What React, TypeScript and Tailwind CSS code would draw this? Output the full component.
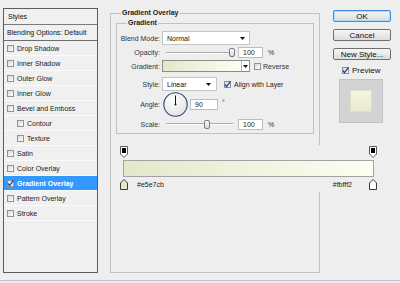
import React from "react";

type StyleRow = { label: string; indent?: boolean; active?: boolean };

const styleRows: StyleRow[] = [
  { label: "Drop Shadow" },
  { label: "Inner Shadow" },
  { label: "Outer Glow" },
  { label: "Inner Glow" },
  { label: "Bevel and Emboss" },
  { label: "Contour", indent: true },
  { label: "Texture", indent: true },
  { label: "Satin" },
  { label: "Color Overlay" },
  { label: "Gradient Overlay", active: true },
  { label: "Pattern Overlay" },
  { label: "Stroke" },
];

const Check = ({ checked }: { checked?: boolean }) => (
  <span className="w-[7px] h-[7px] shrink-0 border border-[#8f9296] bg-gradient-to-br from-[#d9d9d9] to-white flex items-center justify-center">
    {checked && (
      <svg width="7" height="7" viewBox="0 0 7 7" className="overflow-visible">
        <path d="M0.8 3.4 L2.6 5.6 L6.4 0.4" fill="none" stroke="#2140a8" strokeWidth="1.3" />
      </svg>
    )}
  </span>
);

const Arrow = () => (
  <svg width="5" height="3" viewBox="0 0 5 3">
    <polygon points="0,0 5,0 2.5,3" fill="#111" />
  </svg>
);

const Slider = ({ pos }: { pos: number }) => (
  <div className="relative w-[67px] h-[9px] ml-[4px] flex items-center">
    <div className="w-full h-[2px] border-t border-[#a9a9a9] border-b border-b-white" />
    <div
      className="absolute top-0 w-[6px] h-[9px] border border-[#7d7d7d] rounded-[2px] bg-gradient-to-b from-white to-[#d6d6d6]"
      style={{ left: pos }}
    />
  </div>
);

const Field = ({ value, w }: { value: string; w: string }) => (
  <div className={`${w} h-[11px] bg-white border border-[#b9bec6] flex items-center pl-[4px] text-[#222]`}>
    {value}
  </div>
);

const Label = ({ children }: { children: React.ReactNode }) => (
  <span className="w-[43px] shrink-0 text-right text-[#333] mr-[2px]">{children}</span>
);

const Btn = ({ children, primary }: { children: React.ReactNode; primary?: boolean }) => (
  <div
    className={`w-[58px] h-[12px] rounded-[2px] flex items-center justify-center text-[8px] text-[#111] bg-gradient-to-b from-[#f7f7f7] to-[#dcdcdc] border ${
      primary ? "border-[#3d8ee0] shadow-[inset_0_0_0_1px_#a8dcf7]" : "border-[#707070]"
    }`}
  >
    {children}
  </div>
);

const TopStop = () => (
  <svg width="8" height="12" viewBox="0 0 8 12">
    <polygon points="0.5,0.5 7.5,0.5 7.5,8 4,11.5 0.5,8" fill="#fff" stroke="#5a5a5a" />
    <rect x="2" y="2" width="4" height="5" fill="#000" />
  </svg>
);

const BottomStop = ({ color }: { color: string }) => (
  <svg width="8" height="11" viewBox="0 0 8 11">
    <polygon points="4,0.5 7.5,4 7.5,10.5 0.5,10.5 0.5,4" fill={color} stroke="#3a3a3a" />
  </svg>
);

const App = () => {
  return (
    <div className="relative w-[400px] h-[283px] bg-[#eeeeee] overflow-hidden font-['Liberation_Sans',Arial,sans-serif] text-[7px] leading-[9px]">
      <div className="flex h-[280px]">
        {/* styles list */}
        <div className="ml-[3px] mt-[8px] w-[95px] h-[265px] border border-[#5c5c5c] bg-[#f0f0f0] flex flex-col">
          <div className="h-[16px] flex items-center pl-[4px] border-b border-[#7a7a7a] text-[#111]">Styles</div>
          <div className="h-[16px] flex items-center pl-[3px] border-b border-[#6e6e6e] text-[#111]">
            Blending Options: Default
          </div>
          {styleRows.map((r, i) => (
            <div
              key={i}
              className={`h-[15px] flex items-center gap-[3px] border-b border-[#fbfbfb] ${
                r.indent ? "pl-[13px]" : "pl-[3px]"
              } ${r.active ? "bg-[#3399ff] text-white font-bold" : "text-[#1a1a1a]"}`}
            >
              <Check checked={r.active} />
              <span>{r.label}</span>
            </div>
          ))}
        </div>

        {/* settings */}
        <div className="relative ml-[12px] mt-[13px] w-[210px] h-[260px] border border-[#c2c2c2]">
          <span className="absolute -top-[6px] left-[10px] px-[1px] bg-[#eeeeee] font-bold text-[#222]">
            Gradient Overlay
          </span>
          <div className="relative ml-[5px] mt-[9px] w-[198px] h-[111px] border border-[#c2c2c2] flex flex-col">
            <span className="absolute -top-[6px] left-[10px] px-[1px] bg-[#eeeeee] font-bold text-[#222]">
              Gradient
            </span>
            <div className="mt-[7px] h-[14px] flex items-center">
              <Label>Blend Mode:</Label>
              <div className="w-[88px] h-[14px] bg-white border border-[#c4c4c4] flex items-center justify-between pl-[4px] pr-[4px] text-[#111]">
                Normal
                <Arrow />
              </div>
            </div>
            <div className="mt-[2px] h-[11px] flex items-center">
              <Label>Opacity:</Label>
              <Slider pos={63} />
              <div className="ml-[5px]">
                <Field value="100" w="w-[25px]" />
              </div>
              <span className="ml-[5px] text-[#333]">%</span>
            </div>
            <div className="mt-[2px] h-[12px] flex items-center">
              <Label>Gradient:</Label>
              <div className="w-[88px] h-[12px] border border-[#8c8c8c] flex">
                <div className="flex-1 bg-gradient-to-r from-[#e5e7cb] to-[#fbfff2]" />
                <div className="w-[8px] bg-white border-l border-[#b5b5b5] flex items-center justify-center">
                  <Arrow />
                </div>
              </div>
              <span className="ml-[4px] flex items-center gap-[2px] text-[#333]">
                <Check />
                Reverse
              </span>
            </div>
            <div className="mt-[5px] h-[14px] flex items-center">
              <Label>Style:</Label>
              <div className="w-[55px] h-[14px] bg-white border border-[#c4c4c4] flex items-center justify-between pl-[4px] pr-[5px] text-[#111]">
                Linear
                <Arrow />
              </div>
              <span className="ml-[7px] flex items-center gap-[3px] text-[#222]">
                <Check checked />
                Align with Layer
              </span>
            </div>
            <div className="mt-[1px] h-[25px] flex items-center">
              <Label>Angle:</Label>
              <svg width="25" height="25" viewBox="0 0 25 25" className="ml-[1px]">
                <defs>
                  <radialGradient id="dial" cx="40%" cy="35%" r="70%">
                    <stop offset="0%" stopColor="#ffffff" />
                    <stop offset="100%" stopColor="#e2e2e2" />
                  </radialGradient>
                </defs>
                <circle cx="12.5" cy="12.5" r="11.7" fill="url(#dial)" stroke="#2f4574" strokeWidth="1.1" />
                <line x1="12.5" y1="12.5" x2="12.5" y2="3.5" stroke="#111" strokeWidth="1" />
                <circle cx="12.5" cy="12.5" r="1" fill="#111" />
              </svg>
              <div className="ml-[2px]">
                <Field value="90" w="w-[28px]" />
              </div>
              <span className="ml-[4px] self-start mt-[6px] text-[#333]">°</span>
            </div>
            <div className="mt-[1px] h-[12px] flex items-center">
              <Label>Scale:</Label>
              <Slider pos={38} />
              <div className="ml-[5px]">
                <Field value="100" w="w-[25px]" />
              </div>
              <span className="ml-[5px] text-[#333]">%</span>
            </div>
          </div>
        </div>

        {/* buttons */}
        <div className="ml-[13px] mt-[10px] w-[58px] flex flex-col">
          <Btn primary>OK</Btn>
          <div className="mt-[7px]">
            <Btn>Cancel</Btn>
          </div>
          <div className="mt-[7px]">
            <Btn>New Style...</Btn>
          </div>
          <div className="mt-[5px] h-[10px] ml-[9px] flex items-center gap-[3px] text-[8px] text-[#111]">
            <Check checked />
            Preview
          </div>
          <div className="mt-[4px] ml-[6px] w-[44px] h-[44px] bg-[#d3d3d3] border border-[#c2c2c2] flex items-center justify-center">
            <div className="w-[22px] h-[22px] border border-[#dedfca] bg-gradient-to-b from-[#f3f5e2] to-[#e9ebd0]" />
          </div>
        </div>
      </div>
      <div className="h-[3px] border-t border-[#cdbfcf] bg-[#f1e9f1]" />

      {/* gradient editor strip laid over the dialog */}
      <div className="absolute left-[113px] top-[145px] w-[272px] h-[47px] bg-[#eeeeee] flex flex-col">
        <div className="mt-[1px] h-[12px] flex justify-between pl-[7px] pr-[8px]">
          <TopStop />
          <TopStop />
        </div>
        <div className="mt-[2px] ml-[10px] w-[251px] h-[17px] border border-[#a3a3a3] bg-gradient-to-r from-[#e5e7cb] to-[#fbfff2]" />
        <div className="mt-[2px] h-[11px] flex items-center pl-[7px] pr-[8px] text-[#222]">
          <BottomStop color="#e5e7cb" />
          <span className="ml-[9px]">#e5e7cb</span>
          <span className="ml-auto mr-[17px]">#fbfff2</span>
          <BottomStop color="#ffffff" />
        </div>
      </div>
    </div>
  );
};

export default App;
